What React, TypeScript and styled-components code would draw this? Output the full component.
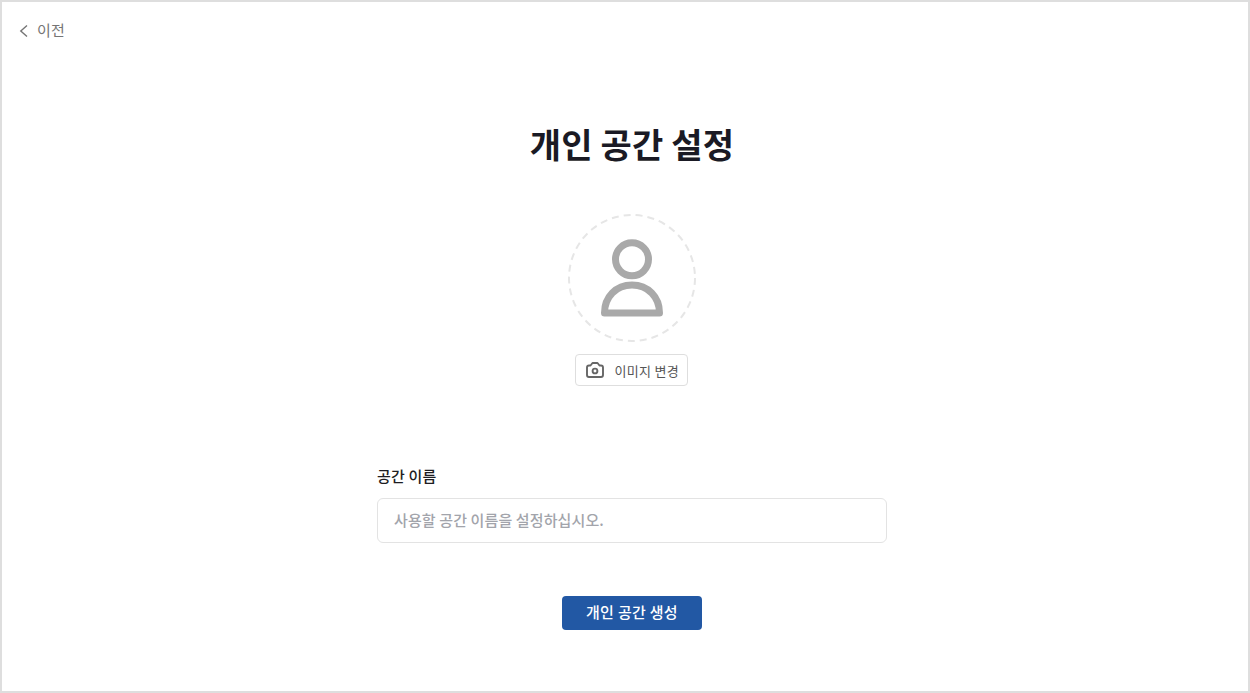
import React from "react";
import styled, { createGlobalStyle } from "styled-components";

const Global = createGlobalStyle`
  html, body { margin: 0; padding: 0; background: #fff; }
  body { font-family: "Noto Sans CJK KR", "Noto Sans", sans-serif; }
  * { box-sizing: border-box; }
`;

const Frame = styled.div`
  width: 1250px;
  height: 693px;
  border: 2px solid #dedede;
  background: #fff;
  display: flex;
  flex-direction: column;
  overflow: hidden;
`;

const BackRow = styled.div`
  display: flex;
  align-items: center;
  gap: 7px;
  height: 22px;
  margin: 16px 0 0 16px;
  color: #757575;
  font-size: 15px;
  letter-spacing: 0.2px;
`;

const Main = styled.main`
  display: flex;
  flex-direction: column;
  align-items: center;
  width: 510px;
  margin-left: 375px;
`;

const Title = styled.h1`
  margin: 79px 0 0;
  height: 50px;
  line-height: 50px;
  font-size: 34px;
  font-weight: 700;
  letter-spacing: 0.17px;
  color: #1a1a24;
`;

const Avatar = styled.div`
  margin-top: 45px;
  width: 128px;
  height: 128px;
  display: flex;
  align-items: center;
  justify-content: center;
`;

const ChangeButton = styled.button`
  margin: 12px 2px 0 0;
  width: 113px;
  height: 32px;
  display: flex;
  align-items: center;
  gap: 10px;
  padding: 0 0 0 9px;
  border: 1px solid #dedede;
  border-radius: 4px;
  background: #fff;
  font-family: inherit;
  font-size: 13px;
  letter-spacing: 0.3px;
  color: #555;
`;

const Field = styled.div`
  width: 100%;
  margin-top: 79px;
  display: flex;
  flex-direction: column;
`;

const Label = styled.label`
  font-size: 15px;
  font-weight: 500;
  line-height: 22px;
  letter-spacing: 0.2px;
  color: #1d1d22;
`;

const Input = styled.input`
  margin-top: 11px;
  width: 100%;
  height: 45px;
  padding: 0 16px 2px;
  border: 1px solid #e3e3e3;
  border-radius: 6px;
  font-family: inherit;
  font-size: 15px;
  font-weight: 500;
  letter-spacing: 0.12px;
  outline: none;
  &::placeholder { color: #a2a4ab; opacity: 1; }
`;

const Submit = styled.button`
  margin-top: 53px;
  width: 140px;
  height: 34px;
  padding: 0 0 3px;
  border: 0;
  border-radius: 4px;
  background: #2258a4;
  color: #fff;
  font-family: inherit;
  font-size: 15px;
  font-weight: 500;
  letter-spacing: 0.3px;
`;

export default function App() {
  return (
    <>
      <Global />
      <Frame>
        <BackRow>
          <svg width="12" height="16" viewBox="0 0 12 16" fill="none" stroke="#757575" strokeWidth="1.4">
            <path d="M9 4.5 L2.8 10 L9 15.5" />
          </svg>
          <span>이전</span>
        </BackRow>
        <Main>
          <Title>개인 공간 설정</Title>
          <Avatar>
            <svg width="128" height="128" viewBox="0 0 128 128" fill="none">
              <circle cx="64" cy="64" r="63" stroke="#e6e6e6" strokeWidth="2" strokeDasharray="7 5" />
              <circle cx="64" cy="45.3" r="16.5" stroke="#a9a9a9" strokeWidth="7" />
              <path d="M36.5 99 C36.5 83 48 71 64 71 C80 71 91.5 83 91.5 99 Z" stroke="#a9a9a9" strokeWidth="7" strokeLinejoin="round" />
            </svg>
          </Avatar>
          <ChangeButton>
            <svg width="20" height="18" viewBox="0 0 20 18" fill="none" stroke="#666" strokeWidth="1.9" strokeLinejoin="round">
              <path d="M2 6.5 Q2 4.5 4 4.5 H5.5 L7.5 2 H12.5 L14.5 4.5 H16 Q18 4.5 18 6.5 V14 Q18 16 16 16 H4 Q2 16 2 14 Z" />
              <circle cx="10" cy="10" r="2.4" />
            </svg>
            <span>이미지 변경</span>
          </ChangeButton>
          <Field>
            <Label>공간 이름</Label>
            <Input placeholder="사용할 공간 이름을 설정하십시오." />
          </Field>
          <Submit>개인 공간 생성</Submit>
        </Main>
      </Frame>
    </>
  );
}
